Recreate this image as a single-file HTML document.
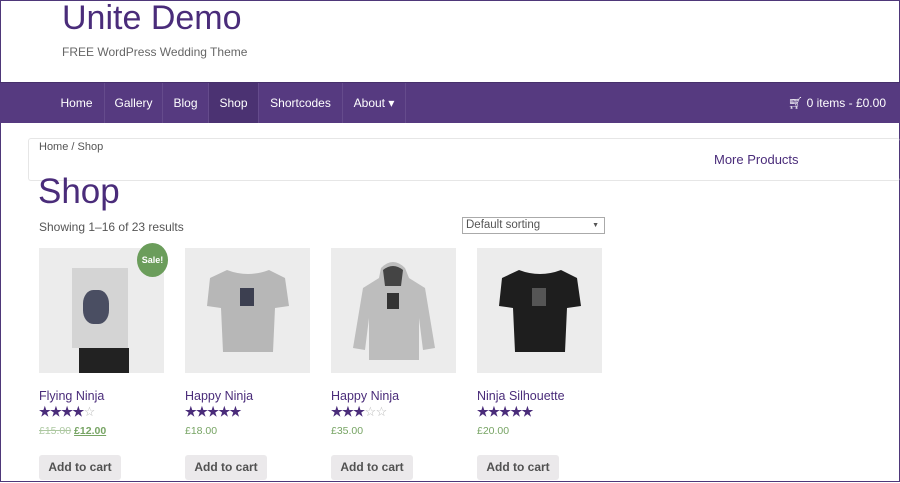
<!DOCTYPE html>
<html><head><meta charset="utf-8"><style>
*{margin:0;padding:0;box-sizing:border-box}
body{width:900px;height:483px;overflow:hidden;background:#fff;font-family:"Liberation Sans",sans-serif;position:relative}
.frame{position:absolute;left:0;top:0;width:900px;height:482px;border:1px solid #4e3779}
.abs{position:absolute}
.title{left:62px;top:-1px;font-size:34px;color:#4a2c7a;white-space:nowrap}
.tag{left:62px;top:45px;font-size:12px;color:#666}
.nav{left:0;top:82px;width:900px;height:41px;background:#563a80;border-top:1px solid #46306b}
.nav a{position:absolute;top:0;height:40px;line-height:40px;color:#fff;font-size:12px;text-align:center;border-right:1px solid #654b8c}
.crumb{left:28px;top:138px;width:872px;height:43px;border:1px solid #e6e6e6;border-right:none;border-radius:3px}
.img{position:absolute;top:248px;width:125px;height:125px;background:#ececec;overflow:hidden}
.pn{position:absolute;top:389px;font-size:12.5px;color:#4a2c7a}
.st{position:absolute;top:404px;font-size:13px;color:#4a2c7a;letter-spacing:-0.5px;font-weight:bold}
.pr{position:absolute;top:425px;font-size:10.5px;color:#77a464}
.btn{position:absolute;top:455px;width:82px;height:25px;background:#ebe9eb;border-radius:3px;font-size:12px;font-weight:bold;color:#515151;text-align:center;line-height:25px}
</style></head><body>
<div class="frame"></div>
<div class="abs title">Unite Demo</div>
<div class="abs tag">FREE WordPress Wedding Theme</div>
<div class="abs nav">
<a style="left:49px;width:56px">Home</a>
<a style="left:105px;width:58px">Gallery</a>
<a style="left:163px;width:46px">Blog</a>
<a style="left:209px;width:50px;background:#4b3272">Shop</a>
<a style="left:259px;width:84px">Shortcodes</a>
<a style="left:343px;width:63px">About ▾</a>
<span style="position:absolute;right:14px;top:0;line-height:40px;color:#fff;font-size:12px">&#x1F6D2;&#xFE0E; 0 items - £0.00</span>
</div>
<div class="abs crumb"></div>
<div class="abs" style="left:39px;top:141px;font-size:11px;color:#555">Home / Shop</div>
<div class="abs" style="left:714px;top:152px;font-size:13px;color:#4a2c7a">More Products</div>
<div class="abs" style="left:38px;top:172px;font-size:35px;color:#4a2c7a">Shop</div>
<div class="abs" style="left:39px;top:220px;font-size:12px;color:#555">Showing 1–16 of 23 results</div>
<div class="abs" style="left:462px;top:217px;width:143px;height:17px;border:1px solid #aaa;font-size:11.5px;color:#555;padding-left:3px;line-height:15px">Default sorting<span style="position:absolute;right:5px;font-size:7px">▼</span></div>

<div class="img" style="left:39px">
<div class="abs" style="left:33px;top:20px;width:56px;height:80px;background:#d4d4d4"></div>
<div class="abs" style="left:40px;top:100px;width:50px;height:25px;background:#222"></div>
<div class="abs" style="left:44px;top:42px;width:26px;height:34px;background:#4a4e62;border-radius:40%"></div>
</div>
<div class="abs" style="left:137px;top:243px;width:31px;height:34px;border-radius:50%;background:#6b9d5b;color:#fff;font-size:9px;font-weight:bold;text-align:center;line-height:34px">Sale!</div>
<div class="img" style="left:185px">
<svg width="125" height="125"><path d="M42 22 L25 30 L22 58 L36 60 L38 104 L88 104 L90 60 L104 58 L100 30 L84 22 Q63 30 42 22Z" fill="#b7b7b7"/><rect x="55" y="40" width="14" height="18" fill="#3c3f50"/></svg>
</div>
<div class="img" style="left:331px">
<svg width="125" height="125"><path d="M50 20 Q62 8 74 20 L78 30 L94 40 L104 100 L92 102 L88 70 L88 112 L38 112 L38 70 L34 102 L22 100 L32 40 L48 30Z" fill="#bdbdbd"/><path d="M52 22 Q62 14 72 22 L70 38 L54 38Z" fill="#444"/><rect x="56" y="45" width="12" height="16" fill="#333"/></svg>
</div>
<div class="img" style="left:477px">
<svg width="125" height="125"><path d="M42 22 L25 30 L22 58 L36 60 L38 104 L88 104 L90 60 L104 58 L100 30 L84 22 Q63 30 42 22Z" fill="#1e1e1e"/><rect x="55" y="40" width="14" height="18" fill="#555"/></svg>
</div>

<div class="pn" style="left:39px">Flying Ninja</div>
<div class="pn" style="left:185px">Happy Ninja</div>
<div class="pn" style="left:331px">Happy Ninja</div>
<div class="pn" style="left:477px">Ninja Silhouette</div>
<div class="st" style="left:39px">★★★★<span style="color:#bbb;font-weight:normal">☆</span></div>
<div class="st" style="left:185px">★★★★★</div>
<div class="st" style="left:331px">★★★<span style="color:#bbb;font-weight:normal">☆☆</span></div>
<div class="st" style="left:477px">★★★★★</div>
<div class="pr" style="left:39px"><s style="opacity:.6">£15.00</s> <b><u>£12.00</u></b></div>
<div class="pr" style="left:185px">£18.00</div>
<div class="pr" style="left:331px">£35.00</div>
<div class="pr" style="left:477px">£20.00</div>
<div class="btn" style="left:39px">Add to cart</div>
<div class="btn" style="left:185px">Add to cart</div>
<div class="btn" style="left:331px">Add to cart</div>
<div class="btn" style="left:477px">Add to cart</div>
</body></html>
